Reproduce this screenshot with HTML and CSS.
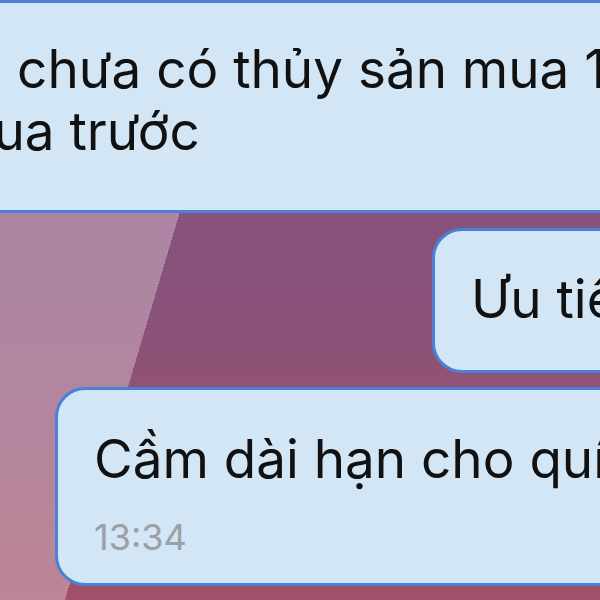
FILE: index.html
```html
<!DOCTYPE html>
<html lang="vi">

<head>
    <meta charset="UTF-8">
    <meta name="viewport" content="width=device-width, initial-scale=1.0">
    <title>Tin nhắn</title>
    <link rel="stylesheet" href="styles.css">
</head>

<body>
    <div class="chat">
        <!-- incoming message, cut off on both sides -->
        <div class="bubble bubble-top">
            <p class="msg msg-first">tại chưa có thủy sản mua 1 tuần<br>qua trước</p>
        </div>

        <!-- outgoing message -->
        <div class="bubble bubble-out">
            <p class="msg">Ưu tiên cầm đồ</p>
        </div>

        <!-- incoming message with time -->
        <div class="bubble bubble-in">
            <p class="msg">Cầm dài hạn cho quí khách</p>
            <span class="time">13:34</span>
        </div>
    </div>
</body>

</html>
```

FILE: styles.css
```css
* {
    margin: 0;
    padding: 0;
    box-sizing: border-box;
    font-family: 'Inter', 'Liberation Sans', sans-serif;
}

body {
    width: 600px;
    height: 600px;
    overflow: hidden;
}

.chat {
    width: 600px;
    height: 600px;
    overflow: hidden;
    display: flex;
    flex-direction: column;
    align-items: flex-start;
    background:
        linear-gradient(106.5deg, rgba(255, 255, 255, 0.3) 31.2%, transparent 31.2%),
        linear-gradient(180deg, #83527c 0%, #8a527a 50%, #a05068 100%);
}

.bubble {
    flex-shrink: 0;
    background: #d3e6f5;
    border: 3px solid #4a80d8;
    border-radius: 30px;
    white-space: nowrap;
}

.msg {
    font-size: 53px;
    line-height: 62px;
    color: #111;
}

.bubble-top {
    margin-left: -82px;
    height: 213px;
    padding: 35px 40px 0 40px;
}

.msg-first {
    text-indent: -19px;
}

.bubble-out {
    margin-top: 15px;
    margin-left: 432px;
    height: 145px;
    padding: 37px 40px 0 36px;
}

.bubble-in {
    margin-top: 14px;
    margin-left: 55px;
    height: 199px;
    padding: 38px 40px 0 36px;
}

.time {
    display: block;
    margin-top: 27px;
    font-size: 36px;
    line-height: 40px;
    color: #9aa0a5;
}
```
